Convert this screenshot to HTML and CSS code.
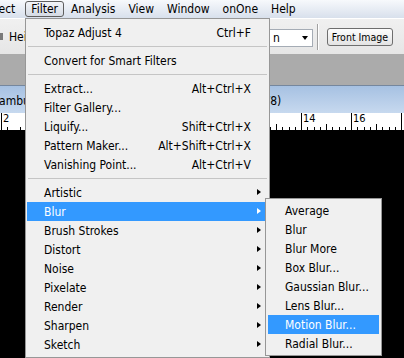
FILE: index.html
```html
<!DOCTYPE html>
<html lang="en">

<head>
  <meta charset="UTF-8" />
  <title>Filter menu</title>
  <link rel="stylesheet" href="styles.css">
</head>

<body>
  <div class="menubar">
    <span class="mb-item first">Select</span>
    <span class="mb-item active">Filter</span>
    <span class="mb-item">Analysis</span>
    <span class="mb-item">View</span>
    <span class="mb-item">Window</span>
    <span class="mb-item">onOne</span>
    <span class="mb-item">Help</span>
  </div>

  <div class="toolbar">
    <span class="tb-field"></span>
    <span class="tb-label">Height:</span>
    <div class="combo">
      <span class="combo-text">n</span>
      <span class="combo-arrow"></span>
    </div>
    <div class="tb-sep"></div>
    <button class="tb-btn">Front Image</button>
  </div>

  <div class="workspace"></div>

  <div class="doc-title">
    <span class="doc-name">Lambuaa_harbour.jpg @ 33.3% </span>
    <span class="doc-mode">(RGB/8)</span>
  </div>

  <div class="ruler">
    <span class="mark">2</span>
    <span class="mark">4</span>
    <span class="mark">6</span>
    <span class="mark">8</span>
    <span class="mark">10</span>
    <span class="mark">12</span>
    <span class="mark">14</span>
    <span class="mark">16</span>
    <span class="mark"></span>
  </div>

  <div class="canvas"></div>

  <!-- Filter dropdown -->
  <div class="menu main-menu">
    <div class="row"><span>Topaz Adjust 4</span><span class="key">Ctrl+F</span></div>
    <div class="sep"></div>
    <div class="row"><span>Convert for Smart Filters</span></div>
    <div class="sep"></div>
    <div class="row"><span>Extract...</span><span class="key">Alt+Ctrl+X</span></div>
    <div class="row"><span>Filter Gallery...</span></div>
    <div class="row"><span>Liquify...</span><span class="key">Shift+Ctrl+X</span></div>
    <div class="row"><span>Pattern Maker...</span><span class="key">Alt+Shift+Ctrl+X</span></div>
    <div class="row"><span>Vanishing Point...</span><span class="key">Alt+Ctrl+V</span></div>
    <div class="sep"></div>
    <div class="row sub"><span>Artistic</span></div>
    <div class="row sub hot"><span>Blur</span></div>
    <div class="row sub"><span>Brush Strokes</span></div>
    <div class="row sub"><span>Distort</span></div>
    <div class="row sub"><span>Noise</span></div>
    <div class="row sub"><span>Pixelate</span></div>
    <div class="row sub"><span>Render</span></div>
    <div class="row sub"><span>Sharpen</span></div>
    <div class="row sub"><span>Sketch</span></div>
  </div>

  <!-- Blur submenu -->
  <div class="menu sub-menu">
    <div class="row"><span>Average</span></div>
    <div class="row"><span>Blur</span></div>
    <div class="row"><span>Blur More</span></div>
    <div class="row"><span>Box Blur...</span></div>
    <div class="row"><span>Gaussian Blur...</span></div>
    <div class="row"><span>Lens Blur...</span></div>
    <div class="row hot"><span>Motion Blur...</span></div>
    <div class="row"><span>Radial Blur...</span></div>
  </div>
</body>

</html>
```

FILE: styles.css
```css
* {
  box-sizing: border-box;
  margin: 0;
  padding: 0;
}

body {
  width: 404px;
  height: 358px;
  overflow: hidden;
  position: relative;
  background-color: #000;
  color: #000;
  font-family: "DejaVu Sans Condensed", "DejaVu Sans", Tahoma, sans-serif;
  font-size: 12px;
}

/* menu bar */
.menubar {
  height: 18px;
  display: flex;
  align-items: center;
  overflow: hidden;
  background: linear-gradient(#f7f9fc, #d8e0ec);
  white-space: nowrap;
}

.mb-item {
  padding: 0 5px;
  margin-right: 1px;
  line-height: 14px;
  border: 1px solid transparent;
  border-radius: 3px;
}

.mb-item.first {
  margin-left: -24px;
  margin-right: 4px;
}

.mb-item.active {
  border-color: #5e5e5e;
  background: linear-gradient(#f2f4f8, #d5dbe4);
}

/* option toolbar */
.toolbar {
  height: 36px;
  display: flex;
  align-items: center;
  background: linear-gradient(#f0f0f0, #e6e6e6);
  border-top: 1px solid #fff;
}

.tb-field {
  width: 3px;
  height: 7px;
  background-color: #7a7a7a;
}

.tb-label {
  margin-left: 6px;
}

.combo {
  margin-left: auto;
  width: 45px;
  height: 18px;
  margin-top: 2px;
  display: flex;
  align-items: center;
  justify-content: space-between;
  padding: 0 4px;
  background-color: #fff;
  border: 1px solid #a5acb5;
}

.combo-arrow {
  width: 0;
  height: 0;
  border-left: 3.5px solid transparent;
  border-right: 3.5px solid transparent;
  border-top: 4px solid #000;
}

.tb-sep {
  width: 2px;
  height: 26px;
  margin: 0 8px 0 4px;
  border-left: 1px solid #a0a0a0;
  border-right: 1px solid #fff;
}

.tb-btn {
  width: 66px;
  height: 18px;
  margin-right: 11px;
  font: inherit;
  font-size: 10.5px;
  white-space: nowrap;
  color: #000;
  border: 1px solid #6e6e6e;
  border-radius: 3px;
  background: linear-gradient(#fdfdfd, #e3e3e3);
}

/* grey workspace behind the document */
.workspace {
  height: 31px;
  background-color: #ababab;
}

.doc-title {
  height: 28px;
  display: flex;
  align-items: center;
  padding-top: 3px;
  border-top: 1px solid #75879e;
  background: linear-gradient(#a6c1e2, #c7d9ef);
  white-space: nowrap;
}

.doc-name {
  flex: 0 0 246px;
  margin-left: -7px;
  overflow: hidden;
}

/* ruler */
.ruler {
  height: 17px;
  display: flex;
  overflow: hidden;
  padding-left: 1px;
  background-color: #fff;
  white-space: nowrap;
}

.mark {
  flex: 0 0 50px;
  height: 100%;
  padding-left: 1px;
  font-size: 11px;
  line-height: 12px;
  border-left: 1px solid #000;
  background:
    linear-gradient(#000, #000) 24px 100% / 1px 6px no-repeat,
    repeating-linear-gradient(to right, transparent 0 5.25px, #000 5.25px 6.25px) 0 100% / 100% 3px no-repeat;
}

.canvas {
  height: 240px;
  background-color: #000;
}

/* dropdown menus */
.menu {
  position: absolute;
  background-color: #f0f0f0;
  border: 1px solid #979797;
  white-space: nowrap;
}

.main-menu {
  left: 25px;
  top: 18px;
  width: 245px;
  height: 340px;
  padding: 4px 2px 0 1px;
}

.sub-menu {
  left: 265px;
  top: 198px;
  width: 117px;
  padding: 2px;
}

.row {
  position: relative;
  height: 19px;
  line-height: 17px;
  padding: 2px 16px 0 17px;
  display: flex;
  justify-content: space-between;
}

.row.sub::after {
  content: "";
  position: absolute;
  right: 6px;
  top: 6px;
  border-left: 4px solid #000;
  border-top: 3.5px solid transparent;
  border-bottom: 3.5px solid transparent;
}

.row.hot {
  background-color: #3399ff;
  color: #fff;
}

.row.hot::after {
  border-left-color: #fff;
}

.sep {
  margin: 4px 0 4px 1px;
  border-top: 1px solid #c5c5c5;
}
```
